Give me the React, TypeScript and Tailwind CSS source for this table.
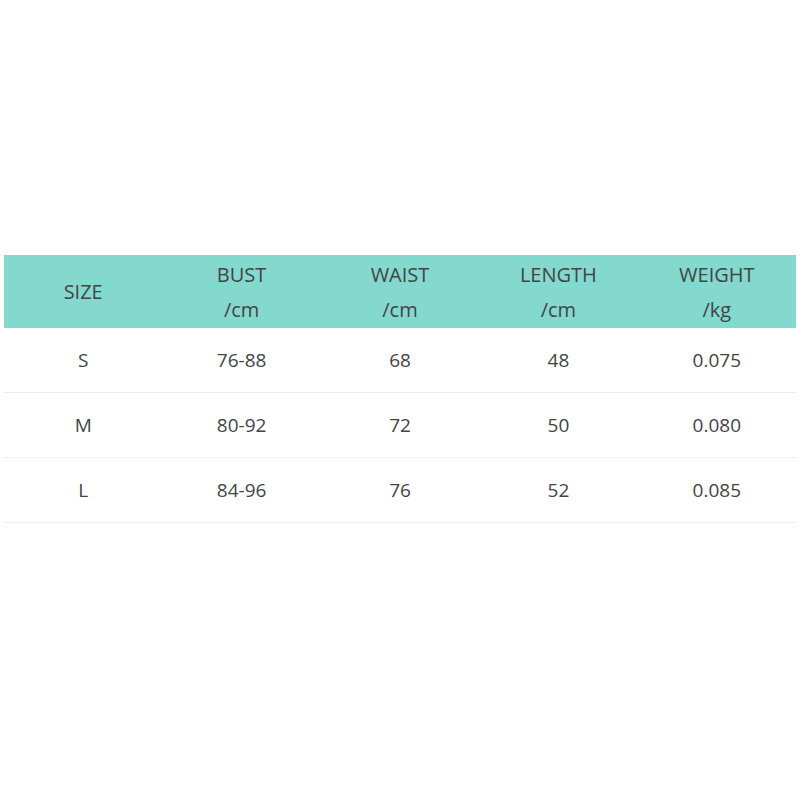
import React from 'react';

const headers = [
  ['SIZE'],
  ['BUST', '/cm'],
  ['WAIST', '/cm'],
  ['LENGTH', '/cm'],
  ['WEIGHT', '/kg'],
];

const rows = [
  ['S', '76-88', '68', '48', '0.075'],
  ['M', '80-92', '72', '50', '0.080'],
  ['L', '84-96', '76', '52', '0.085'],
];

export default function App() {
  return (
    <div
      className="w-[800px] h-[800px] bg-white flex flex-col pt-[255px] px-[4px] text-[#444]"
      style={{ fontFamily: '"Open Sans", "Noto Sans", sans-serif' }}
    >
      <div className="grid grid-cols-5 bg-[#83d9cd] h-[73px] text-[20px]">
        {headers.map((h, i) => (
          <div key={i} className="flex flex-col items-center justify-center leading-[35px]">
            {h.map((t) => (
              <span key={t}>{t}</span>
            ))}
          </div>
        ))}
      </div>
      {rows.map((r) => (
        <div key={r[0]} className="grid grid-cols-5 h-[65px] border-b border-[#eeeeee] text-[19px]">
          {r.map((c, i) => (
            <div key={i} className="flex items-center justify-center">
              {c}
            </div>
          ))}
        </div>
      ))}
    </div>
  );
}
